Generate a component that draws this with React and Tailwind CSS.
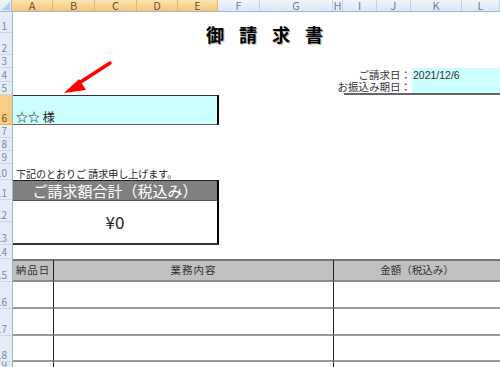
const COLS = [
  { k: 'A', w: 'w-[41px]', on: true },
  { k: 'B', w: 'w-[42px]', on: true },
  { k: 'C', w: 'w-[42px]', on: true },
  { k: 'D', w: 'w-[41px]', on: true },
  { k: 'E', w: 'w-[40px]', on: true },
  { k: 'F', w: 'w-[42px]' },
  { k: 'G', w: 'w-[73px]' },
  { k: 'H', w: 'w-[10px]' },
  { k: 'I', w: 'w-[34px]' },
  { k: 'J', w: 'w-[34px]' },
  { k: 'K', w: 'w-[51px]' },
  { k: 'L', w: 'flex-1' },
]

const ROWS = [
  'h-[21px]', 'h-[22px]', 'h-[13px]', 'h-[14px]', 'h-[13px]', 'h-[30px]',
  'h-[13px]', 'h-[13px]', 'h-[13px]', 'h-[16px]', 'h-[20px]', 'h-[22px]',
  'h-[23px]', 'h-[14px]', 'h-[23px]', 'h-[27px]', 'h-[27px]', 'h-[26px]', 'h-[10px]',
]

function ColHeader({ col }) {
  return (
    <div
      className={`${col.w} h-full shrink-0 flex items-center justify-center border-r text-[11px] leading-none ${
        col.on
          ? 'bg-gradient-to-b from-[#fbe3b4] to-[#f4c774] border-[#f2b25c] text-[#6b5530]'
          : 'bg-gradient-to-b from-[#f1f5fb] to-[#dde7f4] border-[#c2d2e6] text-[#6d7f97]'
      }`}
    >
      {col.k}
    </div>
  )
}

function RowHeader({ n, h }) {
  return (
    <div
      className={`${h} w-[12px] overflow-hidden flex items-end justify-end pr-[5px] pb-[1px] border-b text-[10px] leading-none ${
        n === 6
          ? 'bg-[#f6cd83] border-[#f2b25c] text-[#6b5530]'
          : 'bg-[#e4ecf7] border-[#c9d7e8] text-[#7a8ba2]'
      }`}
    >
      <span className="whitespace-nowrap">{n}</span>
    </div>
  )
}

export default function App() {
  return (
    <div className="relative w-[500px] h-[367px] overflow-hidden bg-white font-['Noto_Sans_CJK_JP','Noto_Sans',sans-serif] text-[#222]">
      {/* column header strip */}
      <div className="flex h-[12px] border-b border-[#9eb6ce]">
        <div className="relative w-[12px] h-full shrink-0 bg-gradient-to-b from-[#f1f5fb] to-[#dde7f4] border-r border-[#9eb6ce]">
          <div className="absolute right-[1px] bottom-[1px] w-0 h-0 border-l-[8px] border-l-transparent border-b-[8px] border-b-[#b8c9dd]" />
        </div>
        {COLS.map((c) => (
          <ColHeader key={c.k} col={c} />
        ))}
      </div>

      <div className="flex">
        {/* row header strip */}
        <div className="flex flex-col border-r border-[#9eb6ce]">
          {ROWS.map((h, i) => (
            <RowHeader key={i} n={i + 1} h={h} />
          ))}
        </div>

        {/* sheet */}
        <div className="flex-1 grid grid-cols-[41px_42px_42px_41px_40px_42px_73px_10px_34px_34px_51px_1fr] grid-rows-[21px_22px_13px_14px_13px_30px_13px_13px_13px_16px_20px_22px_23px_14px_23px_27px_27px_26px_10px]">
          {/* title */}
          <div className="col-start-5 col-end-9 row-start-1 row-end-3 flex items-center justify-center pl-[6px] pt-[1px] gap-[15px] text-[18px] font-bold text-black [text-shadow:1px_1px_0_#aaa]">
            <span>御</span>
            <span>請</span>
            <span>求</span>
            <span>書</span>
          </div>

          {/* dates */}
          <div className="col-start-9 col-end-11 row-start-4 flex items-center justify-end pr-[1px] pt-[1px] text-[10.5px] leading-none text-[#333]">
            ご請求日：
          </div>
          <div className="col-start-9 col-end-11 row-start-5 flex items-end justify-end pr-[1px] pb-[1px] border-b-2 border-[#666] text-[10.5px] leading-none text-[#333] whitespace-nowrap">
            お振込み期日：
          </div>
          <div className="col-start-11 col-end-13 row-start-4 row-end-6 bg-[#ccffff] border-b-2 border-[#666]">
            <div className="h-[14px] flex items-center pl-[1px] pt-[1px] text-[10.5px] leading-none text-[#333] font-['Liberation_Sans',sans-serif]">
              2021/12/6
            </div>
          </div>

          {/* addressee */}
          <div className="col-start-1 col-end-6 row-start-6 bg-[#ccffff] border-t border-b border-r-2 border-t-[#333] border-b-[#7a5a5a] border-r-black flex items-end pl-[3px] pb-[1px] text-[12px] leading-none">
            ☆☆ 様
          </div>

          {/* message */}
          <div className="col-start-1 col-end-8 row-start-10 flex items-end pl-[3px] pb-[1px] text-[10px] leading-none whitespace-nowrap">
            下記のとおりご 請求申し上げます。
          </div>

          {/* total box */}
          <div className="col-start-1 col-end-6 row-start-11 row-end-14 flex flex-col border-t border-[#222] border-r-2 border-r-black border-b-2 border-b-[#333]">
            <div className="h-[20px] bg-[#808080] border-b border-[#555] flex items-center justify-center text-[15px] leading-none text-white">
              ご請求額合計（税込み）
            </div>
            <div className="flex-1 flex items-center justify-center text-[17px] leading-none pb-[1px]">
              ¥0
            </div>
          </div>

          {/* table header */}
          <div className="col-start-1 row-start-15 bg-[#c0c0c0] border-t-2 border-t-[#777] border-b-2 border-b-[#8a8a8a] border-r border-r-[#222] flex items-center justify-center text-[10.5px] leading-none text-[#333] tracking-[1px]">
            納品日
          </div>
          <div className="col-start-2 col-end-8 row-start-15 bg-[#c0c0c0] border-t-2 border-t-[#777] border-b-2 border-b-[#8a8a8a] border-r border-r-[#222] flex items-center justify-center text-[10.5px] leading-none text-[#333] tracking-[1px]">
            業務内容
          </div>
          <div className="col-start-8 col-end-13 row-start-15 bg-[#c0c0c0] border-t-2 border-t-[#777] border-b-2 border-b-[#8a8a8a] flex items-center justify-center text-[10.5px] leading-none text-[#333]">
            金額（税込み）
          </div>

          {/* table rows */}
          <div className="col-start-1 row-start-16 border-b-2 border-b-[#999] border-r border-r-[#222]" />
          <div className="col-start-2 col-end-8 row-start-16 border-b-2 border-b-[#999] border-r border-r-[#222]" />
          <div className="col-start-8 col-end-13 row-start-16 border-b-2 border-b-[#999]" />
          <div className="col-start-1 row-start-17 border-b-2 border-b-[#999] border-r border-r-[#222]" />
          <div className="col-start-2 col-end-8 row-start-17 border-b-2 border-b-[#999] border-r border-r-[#222]" />
          <div className="col-start-8 col-end-13 row-start-17 border-b-2 border-b-[#999]" />
          <div className="col-start-1 row-start-18 border-b-2 border-b-[#999] border-r border-r-[#222]" />
          <div className="col-start-2 col-end-8 row-start-18 border-b-2 border-b-[#999] border-r border-r-[#222]" />
          <div className="col-start-8 col-end-13 row-start-18 border-b-2 border-b-[#999]" />
          <div className="col-start-1 row-start-19 border-r border-r-[#222]" />
          <div className="col-start-2 col-end-8 row-start-19 border-r border-r-[#222]" />
        </div>
      </div>

      {/* red arrow annotation */}
      <svg className="absolute left-0 top-0 pointer-events-none" width="500" height="367">
        <line x1="110" y1="63" x2="76" y2="85" stroke="#ff0000" strokeWidth="3.5" strokeLinecap="round" />
        <polygon points="64,93 79,79 86,90" fill="#ff0000" />
      </svg>
    </div>
  )
}
